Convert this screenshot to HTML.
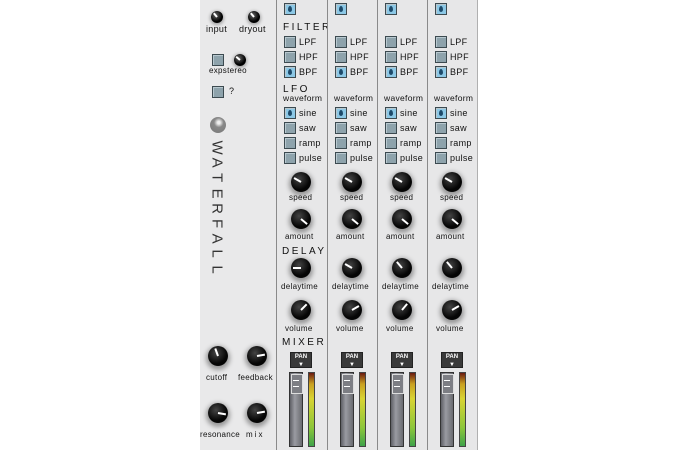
<!DOCTYPE html>
<html><head><style>
*{margin:0;padding:0;box-sizing:border-box}
body{width:675px;height:450px;background:#fff;position:relative;overflow:hidden;font-family:"Liberation Sans",sans-serif;color:#111}
.panel{position:absolute;left:200px;top:0;width:276px;height:450px;background:#e9e9ea}
.col{position:absolute;top:0;width:51px;height:450px;border-left:1px solid #8a8a8a;background:#e7e7e8}
.a{position:absolute}
.cb{position:absolute;width:12px;height:12px;background:#8ea3ac;border:1px solid #3c4a50;box-shadow:inset 1px 1px 0 #b8c8cf}
.cb.on{background:#8cc8e6}
.cb.on:after{content:"";position:absolute;left:3px;top:2px;width:4px;height:6px;background:#1d4a6a;border-radius:50% 50% 50% 50%/60% 60% 40% 40%}
.lb{position:absolute;font-size:9px;letter-spacing:0.3px}
.hd{position:absolute;font-size:10px;letter-spacing:2.5px}
.k{position:absolute;width:20px;height:20px;border-radius:50%;background:radial-gradient(circle at 40% 35%,#444,#050505 60%);box-shadow:0 2px 5px 2px rgba(0,0,0,.35)}
.k i{position:absolute;left:9px;top:2px;width:2px;height:8px;background:#fff;transform-origin:1px 8px}
.sk{position:absolute;width:12px;height:12px;border-radius:50%;background:radial-gradient(circle at 40% 35%,#666,#000 60%);box-shadow:0 1px 3px 1px rgba(0,0,0,.3)}
.sk i{position:absolute;left:5px;top:1px;width:2px;height:5px;background:#fff;transform-origin:1px 5px}
.pan{position:absolute;width:22px;height:16px;background:#3a3a3a;border:1px solid #222;color:#fff;font-size:6px;text-align:center;line-height:8px;font-weight:bold}
.fad{position:absolute;width:14px;height:75px;background:linear-gradient(90deg,#5f6066,#9a9ba2 40%,#6a6b70);border:1px solid #333}
.fad:before{content:"";position:absolute;left:1px;top:1px;width:10px;height:18px;background:#7d7e84;border:1px solid #ddd}
.fad:after{content:"";position:absolute;left:3px;top:7px;width:6px;height:5px;border-top:1px solid #fff;border-bottom:1px solid #fff}
.met{position:absolute;width:7px;height:75px;background:linear-gradient(#6b1a10,#c9a021 15%,#d9d433 35%,#8cc63a 75%,#3fa34a);border:1px solid #444}
</style></head><body>
<div class="panel">
<!-- left section -->
<div class="sk" style="left:11px;top:11px"><i style="transform:rotate(-40deg)"></i></div>
<div class="sk" style="left:48px;top:11px"><i style="transform:rotate(-40deg)"></i></div>
<div class="lb" style="left:6px;top:24px">input</div>
<div class="lb" style="left:39px;top:24px">dryout</div>
<div class="cb" style="left:12px;top:54px"></div>
<div class="sk" style="left:34px;top:54px"><i style="transform:rotate(-50deg)"></i></div>
<div class="lb" style="left:9px;top:66px;font-size:8px">expstereo</div>
<div class="cb" style="left:12px;top:86px"></div>
<div class="lb" style="left:29px;top:86px">?</div>
<div class="a" style="left:10px;top:117px;width:16px;height:16px;border-radius:50%;background:radial-gradient(circle at 55% 35%,#eee 10%,#888 35%,#777)"></div>
<div class="a" style="left:7px;top:140px;width:20px;font-size:15px;line-height:15.2px;color:#333;font-weight:normal;text-align:center;">
<div style="transform:rotate(90deg)">W</div><div style="transform:rotate(90deg)">A</div><div style="transform:rotate(90deg)">T</div><div style="transform:rotate(90deg)">E</div><div style="transform:rotate(90deg)">R</div><div style="transform:rotate(90deg)">F</div><div style="transform:rotate(90deg)">A</div><div style="transform:rotate(90deg)">L</div><div style="transform:rotate(90deg)">L</div></div>
<div class="k" style="left:8px;top:346px"><i style="transform:rotate(-20deg)"></i></div>
<div class="k" style="left:47px;top:346px"><i style="transform:rotate(80deg)"></i></div>
<div class="lb" style="left:6px;top:373px;font-size:8px">cutoff</div>
<div class="lb" style="left:38px;top:373px;font-size:8px">feedback</div>
<div class="k" style="left:8px;top:403px"><i style="transform:rotate(100deg)"></i></div>
<div class="k" style="left:47px;top:403px"><i style="transform:rotate(80deg)"></i></div>
<div class="lb" style="left:0px;top:430px;font-size:8px">resonance</div>
<div class="lb" style="left:46px;top:430px;font-size:8px;letter-spacing:2px">mix</div>
</div>

<!-- column template repeated -->
<div class="col" style="left:276px">
<div class="cb on" style="left:7px;top:3px"></div>
<div class="hd" style="left:6px;top:22px">FILTER</div>
<div class="cb" style="left:7px;top:36px"></div><div class="lb" style="left:22px;top:37px">LPF</div>
<div class="cb" style="left:7px;top:51px"></div><div class="lb" style="left:22px;top:52px">HPF</div>
<div class="cb on" style="left:7px;top:66px"></div><div class="lb" style="left:22px;top:67px">BPF</div>
<div class="hd" style="left:6px;top:84px">LFO</div>
<div class="lb" style="left:6px;top:93px;font-size:8.5px">waveform</div>
<div class="cb on" style="left:7px;top:107px"></div><div class="lb" style="left:22px;top:108px">sine</div>
<div class="cb" style="left:7px;top:122px"></div><div class="lb" style="left:22px;top:123px">saw</div>
<div class="cb" style="left:7px;top:137px"></div><div class="lb" style="left:22px;top:138px">ramp</div>
<div class="cb" style="left:7px;top:152px"></div><div class="lb" style="left:22px;top:153px">pulse</div>
<div class="k" style="left:14px;top:172px"><i style="transform:rotate(-60deg)"></i></div>
<div class="lb" style="left:12px;top:193px;font-size:8px">speed</div>
<div class="k" style="left:14px;top:209px"><i style="transform:rotate(130deg)"></i></div>
<div class="lb" style="left:8px;top:232px;font-size:8px">amount</div>
<div class="hd" style="left:5px;top:246px">DELAY</div>
<div class="k" style="left:14px;top:258px"><i style="transform:rotate(-90deg)"></i></div>
<div class="lb" style="left:4px;top:282px;font-size:8px">delaytime</div>
<div class="k" style="left:14px;top:300px"><i style="transform:rotate(45deg)"></i></div>
<div class="lb" style="left:8px;top:324px;font-size:8px">volume</div>
<div class="hd" style="left:5px;top:337px">MIXER</div>
<div class="pan" style="left:13px;top:352px">PAN<br>▼</div>
<div class="fad" style="left:12px;top:372px"></div>
<div class="met" style="left:31px;top:372px"></div>
</div>

<div class="col" style="left:327px">
<div class="cb on" style="left:7px;top:3px"></div>
<div class="cb" style="left:7px;top:36px"></div><div class="lb" style="left:22px;top:37px">LPF</div>
<div class="cb" style="left:7px;top:51px"></div><div class="lb" style="left:22px;top:52px">HPF</div>
<div class="cb on" style="left:7px;top:66px"></div><div class="lb" style="left:22px;top:67px">BPF</div>
<div class="lb" style="left:6px;top:93px;font-size:8.5px">waveform</div>
<div class="cb on" style="left:7px;top:107px"></div><div class="lb" style="left:22px;top:108px">sine</div>
<div class="cb" style="left:7px;top:122px"></div><div class="lb" style="left:22px;top:123px">saw</div>
<div class="cb" style="left:7px;top:137px"></div><div class="lb" style="left:22px;top:138px">ramp</div>
<div class="cb" style="left:7px;top:152px"></div><div class="lb" style="left:22px;top:153px">pulse</div>
<div class="k" style="left:14px;top:172px"><i style="transform:rotate(-60deg)"></i></div>
<div class="lb" style="left:12px;top:193px;font-size:8px">speed</div>
<div class="k" style="left:14px;top:209px"><i style="transform:rotate(130deg)"></i></div>
<div class="lb" style="left:8px;top:232px;font-size:8px">amount</div>
<div class="k" style="left:14px;top:258px"><i style="transform:rotate(-60deg)"></i></div>
<div class="lb" style="left:4px;top:282px;font-size:8px">delaytime</div>
<div class="k" style="left:14px;top:300px"><i style="transform:rotate(60deg)"></i></div>
<div class="lb" style="left:8px;top:324px;font-size:8px">volume</div>
<div class="pan" style="left:13px;top:352px">PAN<br>▼</div>
<div class="fad" style="left:12px;top:372px"></div>
<div class="met" style="left:31px;top:372px"></div>
</div>

<div class="col" style="left:377px">
<div class="cb on" style="left:7px;top:3px"></div>
<div class="cb" style="left:7px;top:36px"></div><div class="lb" style="left:22px;top:37px">LPF</div>
<div class="cb" style="left:7px;top:51px"></div><div class="lb" style="left:22px;top:52px">HPF</div>
<div class="cb on" style="left:7px;top:66px"></div><div class="lb" style="left:22px;top:67px">BPF</div>
<div class="lb" style="left:6px;top:93px;font-size:8.5px">waveform</div>
<div class="cb on" style="left:7px;top:107px"></div><div class="lb" style="left:22px;top:108px">sine</div>
<div class="cb" style="left:7px;top:122px"></div><div class="lb" style="left:22px;top:123px">saw</div>
<div class="cb" style="left:7px;top:137px"></div><div class="lb" style="left:22px;top:138px">ramp</div>
<div class="cb" style="left:7px;top:152px"></div><div class="lb" style="left:22px;top:153px">pulse</div>
<div class="k" style="left:14px;top:172px"><i style="transform:rotate(-60deg)"></i></div>
<div class="lb" style="left:12px;top:193px;font-size:8px">speed</div>
<div class="k" style="left:14px;top:209px"><i style="transform:rotate(130deg)"></i></div>
<div class="lb" style="left:8px;top:232px;font-size:8px">amount</div>
<div class="k" style="left:14px;top:258px"><i style="transform:rotate(-40deg)"></i></div>
<div class="lb" style="left:4px;top:282px;font-size:8px">delaytime</div>
<div class="k" style="left:14px;top:300px"><i style="transform:rotate(40deg)"></i></div>
<div class="lb" style="left:8px;top:324px;font-size:8px">volume</div>
<div class="pan" style="left:13px;top:352px">PAN<br>▼</div>
<div class="fad" style="left:12px;top:372px"></div>
<div class="met" style="left:31px;top:372px"></div>
</div>

<div class="col" style="left:427px;border-right:1px solid #b0b0b0">
<div class="cb on" style="left:7px;top:3px"></div>
<div class="cb" style="left:7px;top:36px"></div><div class="lb" style="left:22px;top:37px">LPF</div>
<div class="cb" style="left:7px;top:51px"></div><div class="lb" style="left:22px;top:52px">HPF</div>
<div class="cb on" style="left:7px;top:66px"></div><div class="lb" style="left:22px;top:67px">BPF</div>
<div class="lb" style="left:6px;top:93px;font-size:8.5px">waveform</div>
<div class="cb on" style="left:7px;top:107px"></div><div class="lb" style="left:22px;top:108px">sine</div>
<div class="cb" style="left:7px;top:122px"></div><div class="lb" style="left:22px;top:123px">saw</div>
<div class="cb" style="left:7px;top:137px"></div><div class="lb" style="left:22px;top:138px">ramp</div>
<div class="cb" style="left:7px;top:152px"></div><div class="lb" style="left:22px;top:153px">pulse</div>
<div class="k" style="left:14px;top:172px"><i style="transform:rotate(-60deg)"></i></div>
<div class="lb" style="left:12px;top:193px;font-size:8px">speed</div>
<div class="k" style="left:14px;top:209px"><i style="transform:rotate(130deg)"></i></div>
<div class="lb" style="left:8px;top:232px;font-size:8px">amount</div>
<div class="k" style="left:14px;top:258px"><i style="transform:rotate(-40deg)"></i></div>
<div class="lb" style="left:4px;top:282px;font-size:8px">delaytime</div>
<div class="k" style="left:14px;top:300px"><i style="transform:rotate(60deg)"></i></div>
<div class="lb" style="left:8px;top:324px;font-size:8px">volume</div>
<div class="pan" style="left:13px;top:352px">PAN<br>▼</div>
<div class="fad" style="left:12px;top:372px"></div>
<div class="met" style="left:31px;top:372px"></div>
</div>
</body></html>
